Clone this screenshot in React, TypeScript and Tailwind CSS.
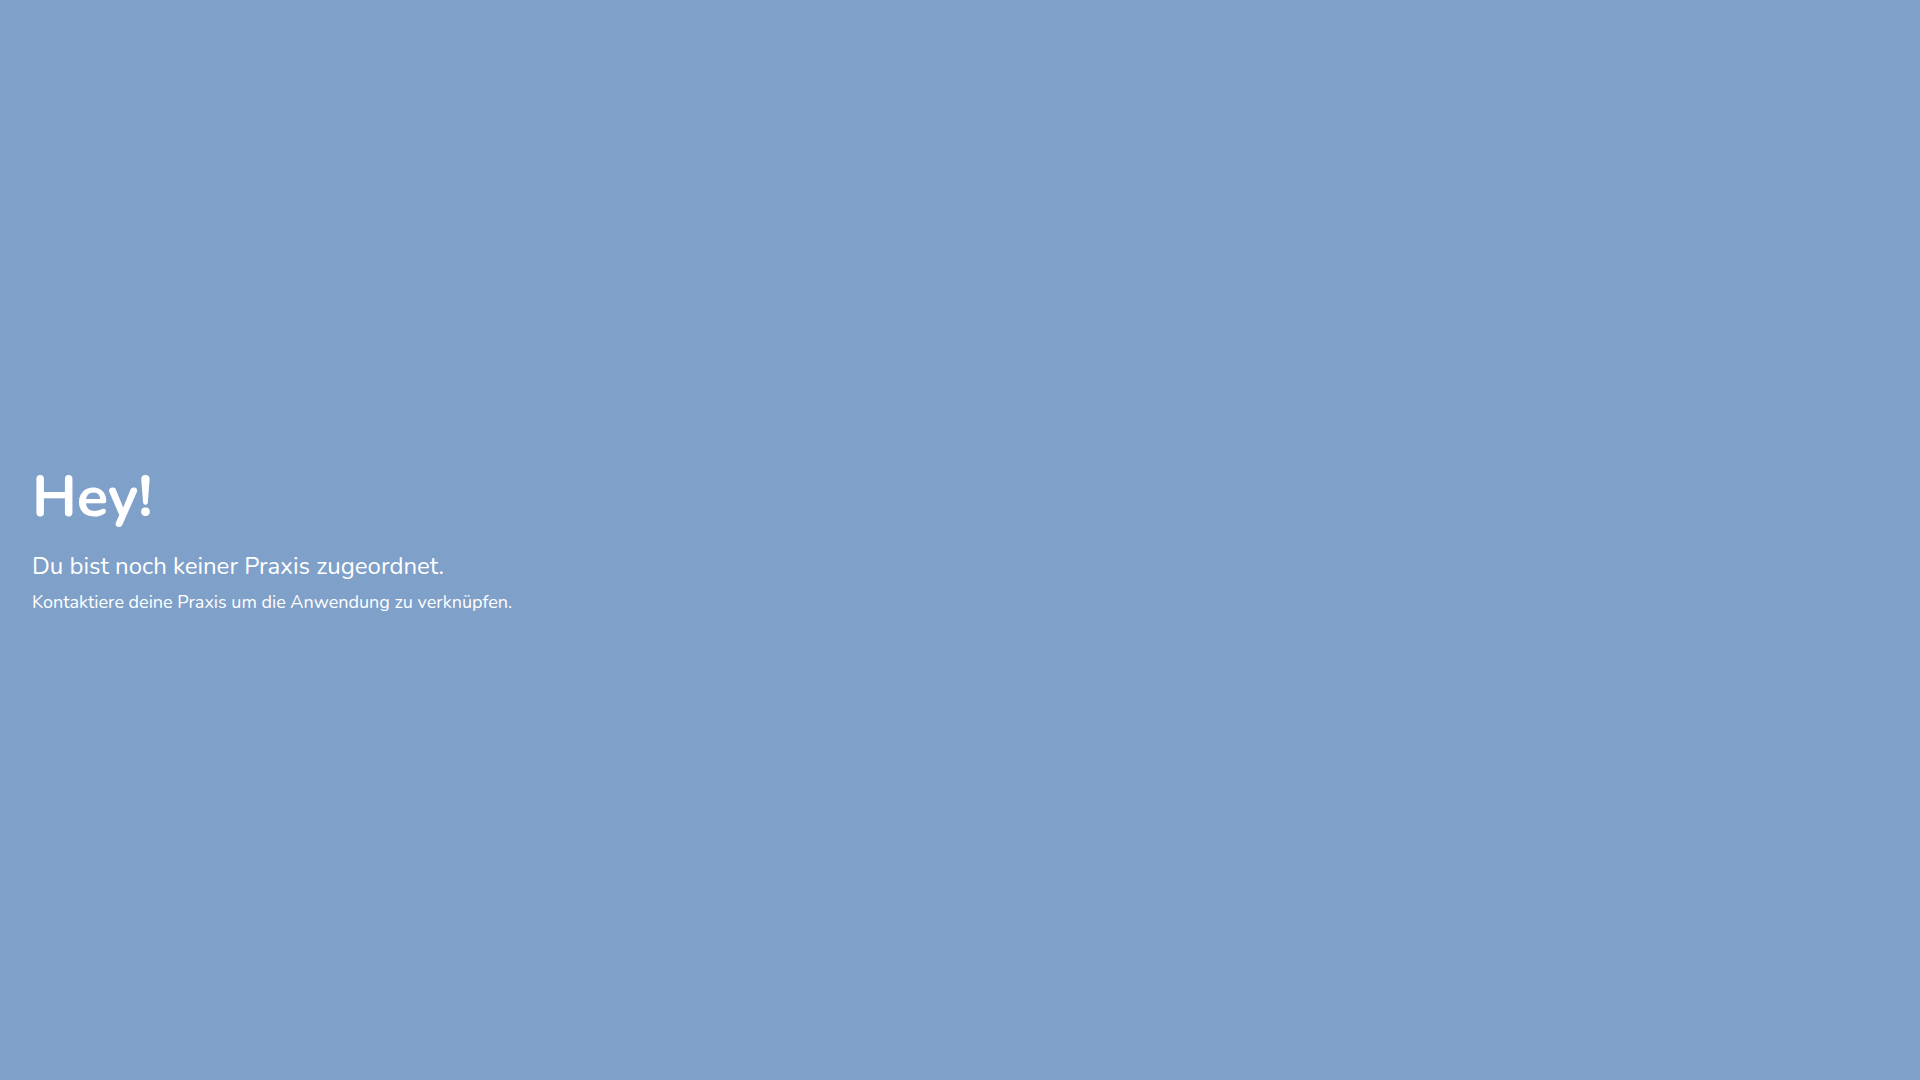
export default function App() {
  return (
    <div
      className="flex min-h-screen w-full items-center bg-[#7fa0c9] px-8 text-white"
      style={{ fontFamily: "Nunito, Lato, 'Open Sans', sans-serif" }}
    >
      <div>
        <h1 className="text-[58px] font-bold leading-[1.1]">Hey!</h1>
        <p className="mt-[22px] text-[24px] leading-[1.3]">Du bist noch keiner Praxis zugeordnet.</p>
        <p className="mt-2 text-[18px] leading-[1.4]">
          Kontaktiere deine Praxis um die Anwendung zu verknüpfen.
        </p>
      </div>
    </div>
  );
}
